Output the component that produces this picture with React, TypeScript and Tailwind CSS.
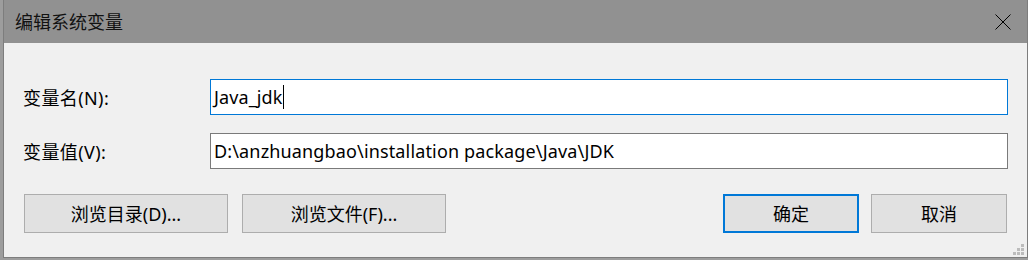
import React from "react";

const FONT = {
  fontFamily:
    '"Segoe UI", "Noto Sans", "Noto Sans CJK SC", sans-serif',
};

function Grip() {
  const dots = [
    [8, 0],
    [4, 4],
    [8, 4],
    [0, 8],
    [4, 8],
    [8, 8],
  ];
  return (
    <div className="absolute right-[3px] bottom-[2px] w-[11px] h-[11px]">
      {dots.map(([x, y], i) => (
        <div
          key={i}
          className="absolute w-[3px] h-[3px] bg-[#bcbcbc]"
          style={{ left: x, top: y }}
        />
      ))}
    </div>
  );
}

export default function App() {
  return (
    <div
      className="w-[1028px] h-[260px] bg-[#9d9d9d] overflow-hidden text-black"
      style={FONT}
    >
      <div className="flex flex-col ml-[3px] w-[1025px] h-[258px] border-l border-r border-b border-[#7d7d7d]">
        <div className="h-[43px] shrink-0 bg-[#919191] flex items-center pl-[11px] pr-[16px]">
          <div className="text-[18px] leading-none text-[#111]">编辑系统变量</div>
          <div className="flex-1" />
          <svg width="16" height="16" viewBox="0 0 16 16" className="mt-[1px]">
            <path d="M0.5 0.5 L15.5 15.5 M15.5 0.5 L0.5 15.5" stroke="#000" strokeWidth="1" fill="none" />
          </svg>
        </div>
        <div className="relative flex-1 bg-[#f0f0f0] flex flex-col pt-[36px] pl-[19px] pr-[19px]">
          <div className="flex items-center h-[36px]">
            <div className="w-[187px] text-[18px] leading-none pt-[1px] tracking-[0.4px]">变量名(N):</div>
            <div className="flex-1 h-[36px] border border-[#0078d7] bg-white flex items-center pl-[3px] text-[18px] leading-none tracking-[0.1px]">
              <span>Java_jdk</span>
              <span className="inline-block w-px h-[24px] bg-black ml-[1px]" />
            </div>
          </div>
          <div className="flex items-center h-[36px] mt-[18px]">
            <div className="w-[187px] text-[18px] leading-none pt-[1px] tracking-[0.4px]">变量值(V):</div>
            <div className="flex-1 h-[36px] border border-[#7a7a7a] bg-white flex items-center pl-[3px] text-[18px] leading-none tracking-[0.15px]">
              D:\anzhuangbao\installation package\Java\JDK
            </div>
          </div>
          <div className="flex items-center mt-[25px] pl-[1px]">
            <button className="w-[204px] h-[39px] bg-[#e1e1e1] border border-[#adadad] text-[18px] leading-none">
              浏览目录(D)...
            </button>
            <button className="w-[204px] h-[39px] ml-[14px] bg-[#e1e1e1] border border-[#adadad] text-[18px] leading-none">
              浏览文件(F)...
            </button>
            <div className="flex-1" />
            <button className="w-[136px] h-[39px] bg-[#e1e1e1] border-2 border-[#0078d7] text-[18px] leading-none">
              确定
            </button>
            <button className="w-[136px] h-[39px] ml-[12px] mr-[1px] bg-[#e1e1e1] border border-[#adadad] text-[18px] leading-none">
              取消
            </button>
          </div>
          <Grip />
        </div>
      </div>
    </div>
  );
}
